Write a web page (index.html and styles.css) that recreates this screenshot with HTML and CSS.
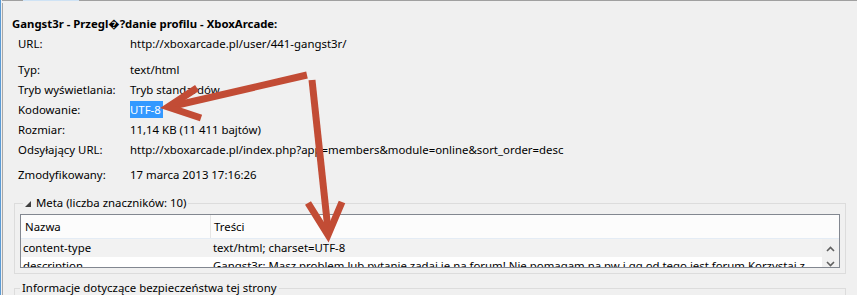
FILE: index.html
```html
<!DOCTYPE html>
<html lang="pl">
<head>
  <meta charset="UTF-8">
  <title>Właściwości strony</title>
  <link rel="stylesheet" href="styles.css">
</head>
<body>
  <div class="topline"><span class="topline-tab"></span></div>
  <div class="window">
    <h1 class="title">Gangst3r - Przegl&#xFFFD;?danie profilu - XboxArcade:</h1>

    <div class="props">
      <span>URL:</span><span>http://xboxarcade.pl/user/441-gangst3r/</span>
    </div>

    <div class="props group-gap">
      <span>Typ:</span><span>text/html</span>
      <span>Tryb wyświetlania:</span><span>Tryb standardów</span>
      <span>Kodowanie:</span><span><span class="selected">UTF-8</span></span>
      <span>Rozmiar:</span><span>11,14 KB (11 411 bajtów)</span>
      <span>Odsyłający URL:</span><span>http://xboxarcade.pl/index.php?app=members&amp;module=online&amp;sort_order=desc</span>
    </div>

    <div class="props group-gap-small">
      <span>Zmodyfikowany:</span><span>17 marca 2013 17:16:26</span>
    </div>

    <fieldset class="group meta">
      <legend>
        <svg class="expander" width="6" height="6" viewBox="0 0 6 6"><polygon points="6,0 6,6 0,6" fill="#404040"/></svg>
        Meta (liczba znaczników: 10)
      </legend>
      <div class="list">
        <div class="list-head">
          <span class="col-name">Nazwa</span>
          <span class="col-value">Treści</span>
        </div>
        <div class="list-body">
          <div class="rows">
            <div class="row row-focus">
              <span class="col-name">content-type</span>
              <span class="col-value">text/html; charset=UTF-8</span>
            </div>
            <div class="row">
              <span class="col-name">description</span>
              <span class="col-value">Gangst3r: Masz problem lub pytanie zadaj je na forum! Nie pomagam na pw i gg od tego jest forum Korzystaj z</span>
            </div>
          </div>
          <div class="scrollbar">
            <svg width="9" height="6" viewBox="0 0 9 6"><polyline points="1,5 4.5,1.5 8,5" fill="none" stroke="#606060" stroke-width="1.6"/></svg>
            <svg width="9" height="6" viewBox="0 0 9 6"><polyline points="1,1 4.5,4.5 8,1" fill="none" stroke="#606060" stroke-width="1.6"/></svg>
          </div>
        </div>
      </div>
    </fieldset>

    <fieldset class="group security">
      <legend>Informacje dotyczące bezpieczeństwa tej strony</legend>
    </fieldset>
  </div>

  <!-- strzałki dorysowane na zrzucie -->
  <svg class="arrows" width="857" height="295" viewBox="0 0 857 295">
    <g fill="none" stroke="#c24c35" stroke-width="7" stroke-linejoin="miter">
      <line x1="306" y1="75" x2="172" y2="106"/>
      <polyline points="196,88 167,107 200,118"/>
      <line x1="311" y1="80" x2="327" y2="230"/>
      <polyline points="307,203 327,235 341,202"/>
    </g>
  </svg>
</body>
</html>
```

FILE: styles.css
```css
body {
  margin: 0;
  width: 857px;
  height: 295px;
  overflow: hidden;
  position: relative;
  background-color: #f0f0f0;
  border-left: 1px solid #5b9bd5;
  box-sizing: border-box;
  padding-left: 1px;
  font-family: "Noto Sans", "Open Sans", sans-serif;
  font-size: 11.4px;
  color: #000;
}

.topline {
  height: 1px;
  background-color: #a0a0a0;
}

.topline-tab {
  display: block;
  margin-left: 21px;
  width: 56px;
  height: 1px;
  background-color: #cfe3f5;
}

.window {
  margin-top: 2px;
  border-left: 1px solid #a8a8a8;
  padding-left: 9px;
  height: 292px;
  overflow: hidden;
}

.title {
  margin: 0;
  padding-top: 11px;
  font-size: 11.35px;
  font-weight: bold;
  line-height: 20px;
}

.props {
  display: grid;
  grid-template-columns: 112px 1fr;
  grid-auto-rows: 20px;
  line-height: 20px;
  padding-left: 6px;
  white-space: nowrap;
}

.group-gap {
  margin-top: 6px;
}

.group-gap-small {
  margin-top: 5px;
}

.selected {
  background-color: #3399ff;
  color: #fff;
  padding: 1px 2px 1px 0;
}

.group {
  margin: 0 11px 0 2px;
  padding: 1px 5px 5px 5px;
  border: 1px solid #dcdcdc;
  min-width: 0;
}

.group legend {
  padding: 0 2px;
  line-height: 20px;
}

.meta {
  margin-top: 8px;
}

.meta legend {
  margin-left: 3px;
}

.expander {
  margin-right: 2px;
  vertical-align: 0;
}

.security {
  margin-top: 4px;
  height: 10px;
}

.list {
  border: 1px solid #828790;
  background-color: #fff;
  height: 52px;
  overflow: hidden;
}

.list-head {
  display: flex;
  height: 23px;
  line-height: 23px;
  background-color: #fcfcfc;
  border-bottom: 1px solid #e4ecf5;
}

.list-head .col-name {
  width: 185px;
  padding-left: 4px;
  border-right: 1px solid #e5e5e5;
}

.list-head .col-value {
  padding-left: 3px;
}

.list-body {
  display: flex;
  height: 28px;
}

.rows {
  flex: 1;
  overflow: hidden;
}

.row {
  display: flex;
  height: 18px;
  line-height: 18px;
  white-space: nowrap;
  background-color: #fff;
}

.row-focus {
  background-color: #f2f2f2;
}

.row .col-name {
  width: 187px;
  flex-shrink: 0;
  padding-left: 2px;
}

.row .col-value {
  padding-left: 3px;
}

.scrollbar {
  width: 17px;
  background-color: #f0f0f0;
  display: flex;
  flex-direction: column;
  align-items: center;
  justify-content: space-between;
  padding: 7px 0 0;
  box-sizing: border-box;
}

.arrows {
  position: absolute;
  top: 0;
  left: 0;
  pointer-events: none;
}
```
